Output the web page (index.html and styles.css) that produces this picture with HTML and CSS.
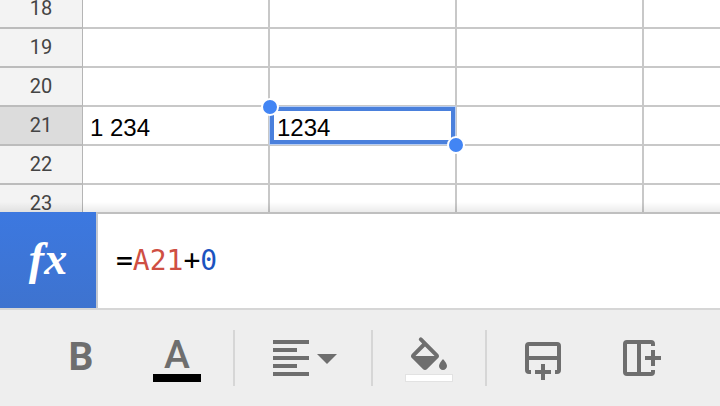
FILE: index.html
```
<!DOCTYPE html>
<html lang="en">
<head>
  <meta charset="UTF-8" />
  <meta name="viewport" content="width=device-width, initial-scale=1" />
  <title>Spreadsheet</title>
  <link rel="stylesheet" href="styles.css">
</head>
<body>
  <main class="sheet">
    <table class="grid">
      <colgroup>
        <col class="col-head" />
        <col class="col-cell" />
        <col class="col-cell" />
        <col class="col-cell" />
        <col />
      </colgroup>
      <tbody>
        <tr><th scope="row">18</th><td></td><td></td><td></td><td></td></tr>
        <tr><th scope="row">19</th><td></td><td></td><td></td><td></td></tr>
        <tr><th scope="row">20</th><td></td><td></td><td></td><td></td></tr>
        <tr class="active-row">
          <th scope="row">21</th>
          <td>1 234</td>
          <td class="selected">1234<span class="selection"></span><span class="handle handle-start"></span><span class="handle handle-end"></span></td>
          <td></td>
          <td></td>
        </tr>
        <tr><th scope="row">22</th><td></td><td></td><td></td><td></td></tr>
        <tr><th scope="row">23</th><td></td><td></td><td></td><td></td></tr>
      </tbody>
    </table>
  </main>

  <div class="formula-bar">
    <button type="button" class="fx-button" aria-label="Insert function">fx</button>
    <div class="formula-input" contenteditable="true" role="textbox" aria-label="Formula" spellcheck="false">=<span class="ref">A21</span>+<span class="number">0</span></div>
  </div>

  <div class="toolbar" role="toolbar" aria-label="Formatting">
    <button type="button" class="tool tool-bold" aria-label="Bold">B</button>
    <button type="button" class="tool tool-color" aria-label="Text color">
      <span class="letter">A</span>
      <span class="swatch swatch-text"></span>
    </button>
    <span class="separator"></span>
    <button type="button" class="tool tool-align" aria-label="Alignment">
      <svg width="64" height="48" viewBox="0 0 64 48">
        <path d="M0 6h36v4H0zM0 14h24v4H0zM0 22h36v4H0zM0 30h24v4H0zM0 38h36v4H0z" />
        <path d="M44 20h20L54 30z" />
      </svg>
    </button>
    <span class="separator"></span>
    <button type="button" class="tool tool-fill" aria-label="Fill color">
      <svg width="48" height="40" viewBox="0 0 24 20">
        <path transform="translate(0 1)" d="M16.56 8.94L8.5.9a1 1 0 0 0-1.4 1.4l1.49 1.49-5.15 5.15c-.59.59-.59 1.54 0 2.12l5.5 5.5c.29.29.68.44 1.06.44s.77-.15 1.06-.44l5.5-5.5c.59-.58.59-1.53 0-2.12zM5.21 10L10 5.21 14.79 10H5.21zM19 11.5s-2 2.17-2 3.5c0 1.1.9 2 2 2s2-.9 2-2c0-1.33-2-3.5-2-3.5z" />
      </svg>
      <span class="swatch swatch-fill"></span>
    </button>
    <span class="separator"></span>
    <button type="button" class="tool tool-row" aria-label="Insert row">
      <svg class="outline" width="48" height="48" viewBox="0 0 48 48">
        <path d="M12 38h-2a2 2 0 0 1-2-2V12a2 2 0 0 1 2-2h28a2 2 0 0 1 2 2v24a2 2 0 0 1-2 2h-2M8 24h32M24 30v16M16 38h16" />
      </svg>
    </button>
    <button type="button" class="tool tool-column" aria-label="Insert column">
      <svg class="outline" width="48" height="48" viewBox="0 0 48 48">
        <path d="M36 12v-2a2 2 0 0 0-2-2H10a2 2 0 0 0-2 2v28a2 2 0 0 0 2 2h24a2 2 0 0 0 2-2v-2M22 8v32M36 16v16M28 24h16" />
      </svg>
    </button>
  </div>
</body>
</html>
```
FILE: styles.css
```
* {
  box-sizing: border-box;
  margin: 0;
  padding: 0;
}
body {
  display: flex;
  flex-direction: column;
  height: 100vh;
  overflow: hidden;
  background: #fff;
  font-family: Roboto, sans-serif;
}
button {
  border: none;
  background: none;
  cursor: pointer;
}

/* grid */
.sheet {
  flex: 1;
  min-height: 0;
  overflow: hidden;
  position: relative;
}
.sheet::after {
  content: "";
  position: absolute;
  left: 0;
  right: 0;
  bottom: 0;
  height: 10px;
  background: linear-gradient(rgba(0,0,0,0), rgba(0,0,0,0.08));
}
.grid {
  width: 100%;
  margin-top: -10px;
  table-layout: fixed;
  border-collapse: separate;
  border-spacing: 0;
}
.col-head {
  width: 83px;
}
.col-cell {
  width: 187px;
}
.grid th,
.grid td {
  height: 39px;
  border-bottom: 2px solid #c8c8c8;
}
.grid th {
  padding-bottom: 1px;
  border-right: 1px solid #b5b5b5;
  border-bottom-color: #bcbcbc;
  background: #f3f3f3;
  color: #444;
  font-size: 20px;
  font-weight: 400;
  line-height: 20px;
}
.grid td {
  padding: 4px 7px 0;
  border-right: 2px solid #c8c8c8;
  color: #000;
  font-family: "Liberation Sans", Arial, sans-serif;
  font-size: 24px;
  line-height: 28px;
}
.grid td:last-child {
  border-right: none;
}
.grid .active-row th {
  background: #dcdcdc;
}
.grid .selected {
  position: relative;
}
.selection {
  position: absolute;
  inset: 0;
  border: 4px solid #4a80dc;
  box-shadow: 0 0 0 1px #b7cdf2;
}
.handle {
  position: absolute;
  width: 18px;
  height: 18px;
  border: 2px solid #fff;
  border-radius: 50%;
  background: #4285f4;
}
.handle-start {
  top: -9px;
  left: -9px;
}
.handle-end {
  right: -10px;
  bottom: -10px;
}

/* formula bar */
.formula-bar {
  display: flex;
  height: 98px;
  border-bottom: 2px solid #d6d6d6;
}
.fx-button {
  width: 96px;
  padding-bottom: 4px;
  background: linear-gradient(#3c78e0, #3e73cf);
  color: #fff;
  font-family: "Liberation Serif", "Times New Roman", serif;
  font-size: 46px;
  font-style: italic;
  font-weight: 700;
}
.formula-input {
  flex: 1;
  padding: 0 18px;
  border-top: 2px solid #bfbfbf;
  border-left: 2px solid #c4c8d0;
  outline: none;
  color: #000;
  font-family: "DejaVu Sans Mono", monospace;
  font-size: 28px;
  line-height: 94px;
}
.ref {
  color: #cf4f43;
}
.number {
  color: #1b53c0;
}

/* toolbar */
.toolbar {
  display: flex;
  align-items: center;
  height: 96px;
  padding-left: 33px;
  background: #eee;
}
.tool {
  display: flex;
  flex-direction: column;
  align-items: center;
  justify-content: space-between;
  width: 112px;
  height: 48px;
  color: #6e6e6e;
}
.tool svg {
  display: block;
  fill: currentColor;
}
.tool .outline {
  fill: none;
  stroke: currentColor;
  stroke-width: 4;
}
.tool-bold,
.tool-color {
  width: 96px;
  font-family: Roboto, sans-serif;
  font-size: 39px;
  line-height: 42px;
}
.tool-bold {
  display: block;
  padding-bottom: 2px;
  font-weight: 700;
}
.tool-color {
  justify-content: flex-end;
  margin-right: 8px;
  font-weight: 500;
}
.tool-color .letter {
  height: 40px;
}
.tool-align {
  width: 136px;
  padding-left: 4px;
}
.tool-column {
  width: 84px;
}
.swatch {
  width: 48px;
  height: 8px;
}
.swatch-text {
  background: #000;
}
.swatch-fill {
  border: 1px solid #e2e2e2;
  background: #fff;
}
.separator {
  width: 2px;
  height: 56px;
  background: #d6d6d6;
}
```
